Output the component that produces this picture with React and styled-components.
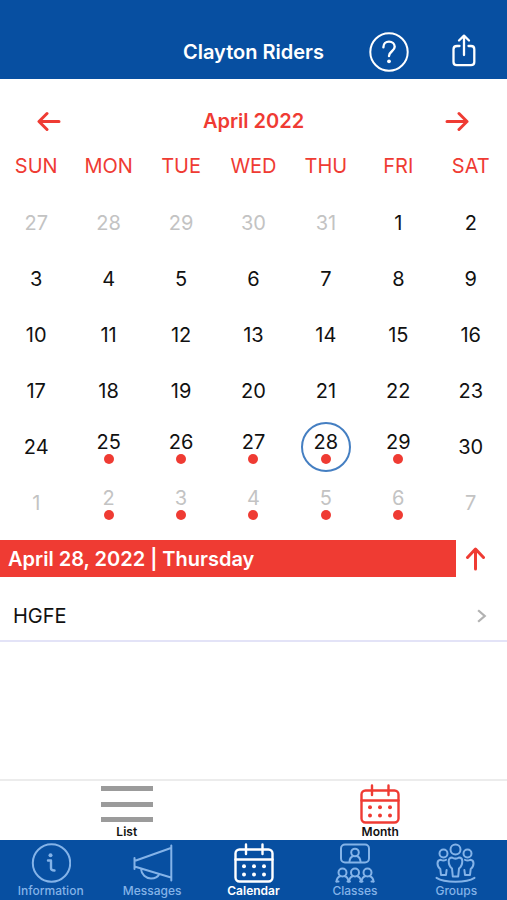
import React, { useState } from "react";
import styled, { createGlobalStyle } from "styled-components";

const BLUE = "#074fa1";
const RED = "#ef3b33";
const SKY = "#84b3e8";

const GlobalStyle = createGlobalStyle`
  *, *::before, *::after { box-sizing: border-box; }
  body {
    margin: 0;
    background: #fff;
    color: #111;
    font-family: Inter, "Liberation Sans", sans-serif;
  }
  button { font: inherit; color: inherit; background: none; border: 0; padding: 0; cursor: pointer; }
  svg { display: block; flex: none; }
`;

const Page = styled.div`
  min-height: 100vh;
  display: flex;
  flex-direction: column;
`;

const Header = styled.header`
  height: 79px;
  padding: 24px 28px 0;
  background: ${BLUE};
  color: #fff;
  display: grid;
  grid-template-columns: 1fr auto 1fr;
  align-items: center;
`;

const Title = styled.h1`
  margin: 0;
  grid-column: 2;
  font-size: 20px;
  line-height: 24px;
  font-weight: 600;
`;

const HeaderActions = styled.div`
  display: flex;
  justify-content: flex-end;
  align-items: center;
  gap: 40px;
`;

const MonthBar = styled.div`
  height: 64px;
  padding: 20px 36px 0;
  display: flex;
  align-items: center;
  justify-content: space-between;
  color: ${RED};
`;

const MonthName = styled.h2`
  margin: 0;
  font-size: 20px;
  line-height: 24px;
  font-weight: 600;
`;

const CalendarTable = styled.table`
  width: 100%;
  table-layout: fixed;
  border-collapse: collapse;
  margin-bottom: 9px;
`;

const Weekday = styled.th`
  height: 52px;
  padding: 0 0 6px;
  color: ${RED};
  font-size: 20px;
  font-weight: 400;
`;

const DayCell = styled.td`
  height: 56px;
  padding: 0;
`;

const DayButton = styled.button`
  width: 50px;
  height: 50px;
  margin: 0 auto;
  display: flex;
  flex-direction: column;
  align-items: center;
  justify-content: center;
  border-radius: 50%;
  && { border: 2px solid ${(p) => (p.$selected ? "#457fc2" : "transparent")}; }
  && { color: ${(p) => (p.$outside ? "#c3c3c3" : "#111")}; }
  font-size: 20px;
  line-height: 24px;
`;

const EventDot = styled.span`
  width: 10px;
  height: 10px;
  border-radius: 50%;
  background: ${RED};
`;

const AgendaHeader = styled.div`
  display: flex;
  align-items: stretch;
  height: 37px;
`;

const AgendaDate = styled.h3`
  flex: 1;
  margin: 0;
  padding: 0 8px;
  background: ${RED};
  color: #fff;
  font-size: 20px;
  line-height: 38px;
  font-weight: 600;
`;

const CollapseButton = styled.button`
  width: 51px;
  display: flex;
  align-items: center;
  && { color: ${RED}; padding-left: 9px; }
`;

const AgendaList = styled.ul`
  flex: 1;
  margin: 0;
  padding: 0;
  list-style: none;
`;

const AgendaLink = styled.a`
  height: 65px;
  padding: 14px 19px 0 13px;
  display: flex;
  justify-content: space-between;
  align-items: center;
  border-bottom: 2px solid #e3e3f7;
  color: #111;
  font-size: 20px;
  line-height: 24px;
  text-decoration: none;
`;

const ViewBar = styled.div`
  height: 61px;
  display: flex;
  border-top: 2px solid #ececec;
`;

const ViewButton = styled.button`
  flex: 1;
  display: flex;
  flex-direction: column;
  align-items: center;
  justify-content: flex-end;
  && { color: #111; font-size: 12px; line-height: 16px; font-weight: 600; }
`;

const RedIcon = styled.span`
  color: ${RED};
`;

const TabBar = styled.nav`
  height: 60px;
  display: flex;
  background: ${BLUE};
`;

const Tab = styled.a`
  flex: 1;
  padding-top: 3px;
  display: flex;
  flex-direction: column;
  align-items: center;
  color: ${(p) => (p.$active ? "#fff" : SKY)};
  font-size: 12px;
  line-height: 16px;
  font-weight: ${(p) => (p.$active ? 600 : 500)};
  text-decoration: none;
`;

const Line = ({ w, h, sw = 2, children }) => (
  <svg
    width={w}
    height={h}
    viewBox={`0 0 ${w} ${h}`}
    fill="none"
    stroke="currentColor"
    strokeWidth={sw}
    strokeLinecap="round"
    strokeLinejoin="round"
    aria-hidden="true"
  >
    {children}
  </svg>
);

const HelpIcon = () => (
  <Line w={40} h={40}>
    <circle cx="20" cy="20" r="18.7" />
    <path d="M14.4 15.2c0-3.6 2.4-5.6 5.6-5.6s5.7 2.1 5.7 5.2c0 4.3-5.7 4.7-5.7 9.2" strokeWidth="2.4" />
    <circle cx="20" cy="29.3" r="1.9" fill="currentColor" stroke="none" />
  </Line>
);

const ShareIcon = () => (
  <Line w={30} h={36} sw={2.3}>
    <path d="M10.5 12H8c-2 0-3.500 1.300-3.500 3.300V28c0 2 1.300 3.200 3.200 3.200H22c2 0 3.300-1.200 3.300-3.200V15.300c0-2-1.300-3.300-3.300-3.300h-2.500M15 21V2M10 6.500 15 1.700 20 6.500" />
  </Line>
);

const ArrowLeftIcon = () => (
  <Line w={26} h={20} sw={3}>
    <path d="M23 10.500H3.500M11 2.500 3 10.500l8 8" />
  </Line>
);

const ArrowRightIcon = () => (
  <Line w={26} h={20} sw={3}>
    <path d="M2 10.500h20M14 2.500l8 8-8 8" />
  </Line>
);

const ArrowUpIcon = () => (
  <Line w={20} h={26} sw={3}>
    <path d="M10.500 23V4M2.500 11.500l8-8.500 8 8.500" />
  </Line>
);

const ChevronIcon = () => (
  <Line w={12} h={16} sw={2.3}>
    <path d="M3 3 8.700 8 3 13" stroke="#b2b2b2" strokeLinecap="square" strokeLinejoin="miter" />
  </Line>
);

const ListIcon = () => (
  <svg width="52" height="38" viewBox="0 0 52 38" fill="#9b9b9b" aria-hidden="true">
    <path d="M0 0h52v5H0zM0 16h52v5H0zM0 31h52v5H0z" />
  </svg>
);

const CalendarIcon = () => (
  <Line w={40} h={40} sw={2.4}>
    <rect x="1.500" y="6.500" width="37" height="32" rx="4" />
    <path d="M1.500 16.500h37M12 1.500v9.500M28.500 1.500v9.500" />
    <g fill="currentColor" stroke="none">
      {[10, 20, 30].map((x) => (
        <React.Fragment key={x}>
          <circle cx={x} cy="23.300" r="2" />
          <circle cx={x} cy="31.500" r="2" />
        </React.Fragment>
      ))}
    </g>
  </Line>
);

const InfoIcon = () => (
  <Line w={40} h={40}>
    <circle cx="20.500" cy="20" r="18.700" />
    <circle cx="19.500" cy="12.300" r="2" fill="currentColor" stroke="none" />
    <path d="M17 17.500h3v7.800c0 1.500 1 2.200 3.500 2.200" strokeWidth="2.400" />
  </Line>
);

const MegaphoneIcon = () => (
  <Line w={42} h={40}>
    <path d="M3.500 15v11M3.500 18 40 5M3.500 23.500 40 34.500M40.300 2.500v35M10 26c.500 5.500 4.800 9.500 10 9.500 4 0 7-1.800 8.400-4.500" />
  </Line>
);

const ClassesIcon = () => (
  <Line w={40} h={40}>
    <rect x="6" y="1.500" width="28" height="18" rx="4" />
    <circle cx="20" cy="9.500" r="3.800" />
    <path d="M14.500 18.500c.300-3 1.500-4.800 3.500-5.300M25.500 18.500c-.300-3-1.500-4.800-3.500-5.300" />
    {[7.5, 20, 32.5].map((x) => (
      <React.Fragment key={x}>
        <circle cx={x} cy="29.500" r="4" />
        <path d={`M${x - 6} 38.500c.2-2.800 1.500-4.600 3.800-5.300M${x + 6} 38.500c-.2-2.800-1.500-4.600-3.800-5.300`} />
      </React.Fragment>
    ))}
    <path d="M1.500 38.500h2M12.500 38.500h2.500M25 38.500h2.500M36.500 38.500h2" />
  </Line>
);

const GroupsIcon = () => (
  <Line w={42} h={40}>
    <circle cx="20.500" cy="6.500" r="5" />
    <path d="M17 14.500c-2 0-3.300 1.500-3.300 3.500 0 3 .8 5.500 3.300 7.500l.8 8h5.400l.8-8c2.500-2 3.300-4.500 3.300-7.500 0-2-1.300-3.500-3.300-3.500-2 1.300-5 1.300-7 0z" />
    <circle cx="8.500" cy="10.500" r="4" />
    <path d="M11 16.800c-1.700.8-3.500.8-5.200 0-2 .2-3.300 1.500-3.300 3.400 0 2.300.8 4.300 2.800 5.800l.7 6h5l.6-5" />
    <circle cx="32.500" cy="10.500" r="4" />
    <path d="M30 16.800c1.700.8 3.500.8 5.200 0 2 .2 3.300 1.500 3.300 3.400 0 2.300-.8 4.300-2.800 5.800l-.7 6h-5l-.6-5" />
    <path d="M1.500 34.800c8 5.200 30 5.200 38 0" />
  </Line>
);

const WEEKDAYS = ["SUN", "MON", "TUE", "WED", "THU", "FRI", "SAT"];

const DAYS = [
  ...[27, 28, 29, 30, 31].map((n) => ({ n, id: `mar-${n}`, outside: true })),
  ...Array.from({ length: 30 }, (_, i) => ({ n: i + 1, id: `apr-${i + 1}`, event: i >= 24 && i <= 28 })),
  ...Array.from({ length: 7 }, (_, i) => ({ n: i + 1, id: `may-${i + 1}`, outside: true, event: i >= 1 && i <= 5 })),
];

const WEEKS = Array.from({ length: 6 }, (_, i) => DAYS.slice(i * 7, i * 7 + 7));

const TABS = [
  ["Information", InfoIcon],
  ["Messages", MegaphoneIcon],
  ["Calendar", CalendarIcon],
  ["Classes", ClassesIcon],
  ["Groups", GroupsIcon],
];

export default function App() {
  const [selected, setSelected] = useState("apr-28");
  return (
    <Page>
      <GlobalStyle />
      <Header>
        <Title>Clayton Riders</Title>
        <HeaderActions>
          <button type="button" aria-label="Help"><HelpIcon /></button>
          <button type="button" aria-label="Share"><ShareIcon /></button>
        </HeaderActions>
      </Header>
      <MonthBar>
        <button type="button" aria-label="Previous month"><ArrowLeftIcon /></button>
        <MonthName>April 2022</MonthName>
        <button type="button" aria-label="Next month"><ArrowRightIcon /></button>
      </MonthBar>
      <CalendarTable>
        <thead>
          <tr>
            {WEEKDAYS.map((d) => <Weekday key={d} scope="col">{d}</Weekday>)}
          </tr>
        </thead>
        <tbody>
          {WEEKS.map((week) => (
            <tr key={week[0].id}>
              {week.map((day) => (
                <DayCell key={day.id}>
                  <DayButton
                    type="button"
                    $outside={day.outside}
                    $selected={day.id === selected}
                    aria-pressed={day.id === selected}
                    onClick={() => setSelected(day.id)}
                  >
                    {day.n}
                    {day.event && <EventDot />}
                  </DayButton>
                </DayCell>
              ))}
            </tr>
          ))}
        </tbody>
      </CalendarTable>
      <AgendaHeader>
        <AgendaDate>April 28, 2022 | Thursday</AgendaDate>
        <CollapseButton type="button" aria-label="Collapse calendar"><ArrowUpIcon /></CollapseButton>
      </AgendaHeader>
      <AgendaList>
        <li>
          <AgendaLink href="#hgfe">HGFE<ChevronIcon /></AgendaLink>
        </li>
      </AgendaList>
      <ViewBar>
        <ViewButton type="button"><ListIcon />List</ViewButton>
        <ViewButton type="button" aria-pressed="true">
          <RedIcon><CalendarIcon /></RedIcon>Month
        </ViewButton>
      </ViewBar>
      <TabBar>
        {TABS.map(([name, Icon]) => (
          <Tab key={name} href={`#${name.toLowerCase()}`} $active={name === "Calendar"}>
            <Icon />{name}
          </Tab>
        ))}
      </TabBar>
    </Page>
  );
}
